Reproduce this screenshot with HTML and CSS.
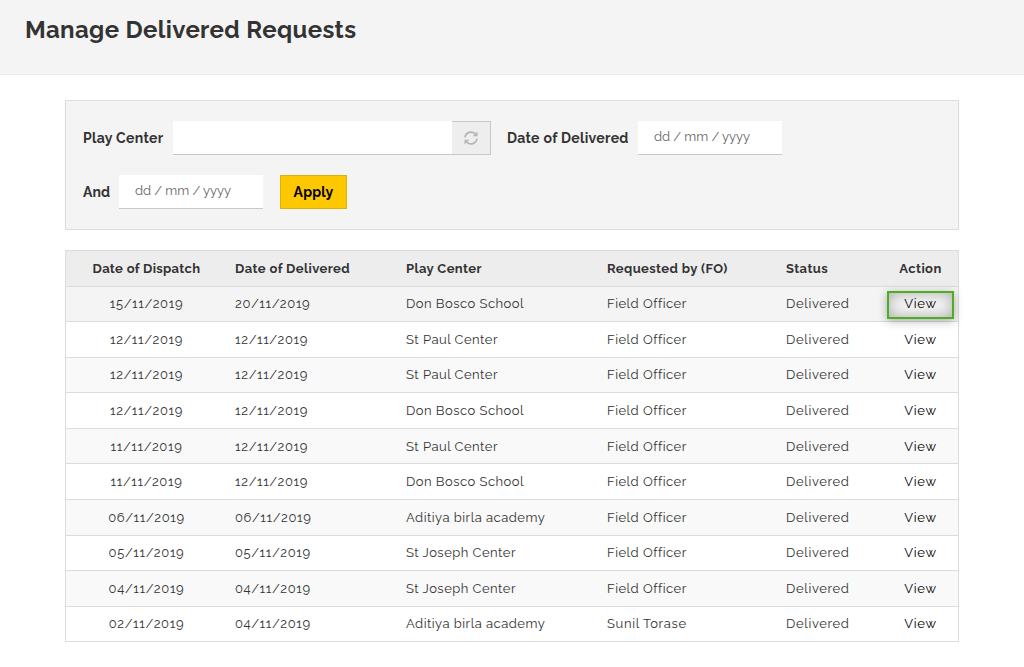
FILE: index.html
```
<!DOCTYPE html>
<html lang="en">
<head>
<meta charset="utf-8">
<title>Manage Delivered Requests</title>
<link rel="stylesheet" href="styles.css">
</head>
<body>
<header class="page-header"><h1><span>Manage Delivered Requests</span></h1></header>
<main class="content">
<form class="filters">
<div class="filter-row">
<label class="w-play"><span>Play Center</span></label>
<div class="lookup"><div class="field"></div><button type="button" class="refresh" aria-label="Refresh"><svg width="14" height="14" viewBox="0 0 14 14"><path d="M1 6.300A6 6 0 0 1 11.300 3M13 7.700A6 6 0 0 1 2.700 11" fill="none" stroke="#b5b5b5" stroke-width="1.700"/><path d="M13.500.5v4.800H8.700zM.5 13.500V8.700h4.800z" fill="#b5b5b5"/></svg></button></div>
<label class="w-date"><span>Date of Delivered</span></label>
<div class="field date"><span>dd / mm / yyyy</span></div>
</div>
<div class="filter-row">
<label class="w-and"><span>And</span></label>
<div class="field date"><span>dd / mm / yyyy</span></div>
<button type="button" class="apply"><span>Apply</span></button>
</div>
</form>
<section class="table">
<div class="row head"><span>Date of Dispatch</span><span>Date of Delivered</span><span>Play Center</span><span>Requested by (FO)</span><span>Status</span><span>Action</span></div>
<div class="row hover"><span>15/11/2019</span><span>20/11/2019</span><span>Don Bosco School</span><span>Field Officer</span><span>Delivered</span><span class="picked">View</span></div>
<div class="row tall"><span>12/11/2019</span><span>12/11/2019</span><span>St Paul Center</span><span>Field Officer</span><span>Delivered</span><span>View</span></div>
<div class="row"><span>12/11/2019</span><span>12/11/2019</span><span>St Paul Center</span><span>Field Officer</span><span>Delivered</span><span>View</span></div>
<div class="row tall"><span>12/11/2019</span><span>12/11/2019</span><span>Don Bosco School</span><span>Field Officer</span><span>Delivered</span><span>View</span></div>
<div class="row low"><span>11/11/2019</span><span>12/11/2019</span><span>St Paul Center</span><span>Field Officer</span><span>Delivered</span><span>View</span></div>
<div class="row tall"><span>11/11/2019</span><span>12/11/2019</span><span>Don Bosco School</span><span>Field Officer</span><span>Delivered</span><span>View</span></div>
<div class="row tall"><span>06/11/2019</span><span>06/11/2019</span><span>Aditiya birla academy</span><span>Field Officer</span><span>Delivered</span><span>View</span></div>
<div class="row"><span>05/11/2019</span><span>05/11/2019</span><span>St Joseph Center</span><span>Field Officer</span><span>Delivered</span><span>View</span></div>
<div class="row tall"><span>04/11/2019</span><span>04/11/2019</span><span>St Joseph Center</span><span>Field Officer</span><span>Delivered</span><span>View</span></div>
<div class="row"><span>02/11/2019</span><span>04/11/2019</span><span>Aditiya birla academy</span><span class="wide">Sunil Torase</span><span>Delivered</span><span>View</span></div>
</section>
</main>
</body>
</html>
```
FILE: styles.css
```
* { box-sizing: border-box; }
body { margin: 0; background: #fff; color: #333; font-family: Raleway, Lato, sans-serif; font-size: 13px; }
.page-header { height: 75px; background: #f4f4f4; border-bottom: 1px solid #ebebeb; padding: 14px 25px; }
h1 { margin: 0; font-size: 24px; line-height: 31px; font-weight: 700; letter-spacing: 0.36px; }
.content { width: 894px; margin: 25px 0 0 65px; }
.filters { height: 130px; padding: 20px 17px; border: 1px solid #dcdcdc; background: #f4f4f4; display: flex; flex-direction: column; gap: 20px; }
.filter-row { display: flex; height: 34px; }
label { font-size: 14px; line-height: 34px; font-weight: 700; white-space: nowrap; letter-spacing: 0.3px; }
.w-play { width: 90px; }
.w-date { width: 131px; margin-left: 16px; }
.w-and { width: 36px; letter-spacing: 0.1px; }
.field { background: #fff; border-bottom: 1px solid #c8c8c8; height: 34px; }
.lookup { display: flex; }
.lookup .field { width: 279px; }
.refresh { width: 39px; height: 34px; padding: 0; background: #eee; border: 1px solid #c8c8c8; border-left: 0; display: flex; align-items: center; justify-content: center; }
.date { width: 144px; padding-left: 16px; font-size: 13px; line-height: 31px; color: #666; letter-spacing: -0.06px; }
.apply { width: 67px; height: 34px; margin-left: 17px; padding: 0; border: 1px solid #dbb110; background: #fdc800; color: #000; font: 700 14px Raleway, Lato, sans-serif; letter-spacing: 0.2px; }
.table { margin-top: 20px; border: 1px solid #dcdcdc; border-bottom: 0; }
.row { display: grid; grid-template-columns: 161px 171px 201px 179px 101px 67px; height: 35px; padding-left: 8px; border-bottom: 1px solid #dcdcdc; line-height: 34px; letter-spacing: 0.48px; }
.row.tall { height: 36px; }
.row.tall, .row.low { line-height: 35px; }
.row:nth-child(even) { background: #f9f9f9; }
.row:nth-child(odd) { background: #fff; }
.row:nth-child(2) { background: #f4f4f4; }
.row.head { background: #ededed; font-weight: 700; height: 36px; line-height: 35px; letter-spacing: 0.4px; }
.row > span { white-space: nowrap; }
.row > span:first-child { width: 145px; text-align: center; }
.row.head > span:first-child { letter-spacing: 0.32px; }
.row:not(.head) > span:nth-child(-n+2) { letter-spacing: 0.66px; }
.row:not(.head) > span:nth-child(5) { letter-spacing: 0.65px; }
.row > .wide { letter-spacing: 0.66px; }
.row > span:last-child { text-align: center; }
.row:not(.head) > span:last-child { color: #000; letter-spacing: 0.75px; }
.row .picked { height: 28px; margin-top: 4px; line-height: 22px; border: 2px solid #4caf20; box-shadow: 0 2px 10px rgba(0,0,0,.3), inset 0 0 14px rgba(0,0,0,.3); }
```
